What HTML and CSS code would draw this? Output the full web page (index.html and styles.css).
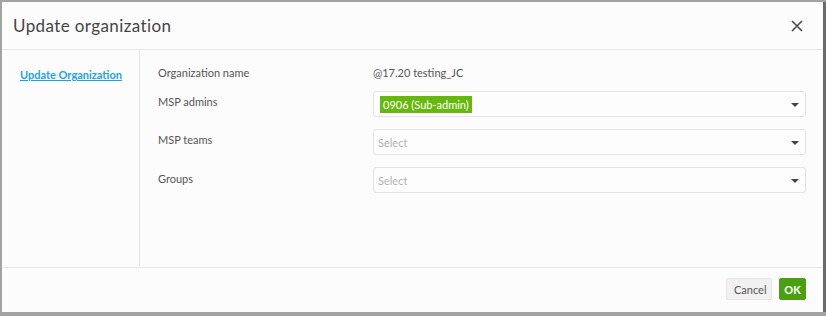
FILE: index.html
```html
<!DOCTYPE html>
<html>
<head>
<meta charset="utf-8">
<link rel="stylesheet" href="styles.css">
</head>
<body>
<div class="screen">
  <div class="modal">
    <div class="modal-header">
      <h1 class="title">Update organization</h1>
      <button class="close" aria-label="Close">
        <svg width="12" height="12" viewBox="0 0 12 12"><path d="M1 1L11 11M11 1L1 11" stroke="#4a4a4a" stroke-width="1.6" fill="none"/></svg>
      </button>
    </div>
    <div class="modal-body">
      <nav class="sidebar">
        <a class="side-link" href="#">Update Organization</a>
      </nav>
      <div class="form">
        <div class="row row-text">
          <div class="label">Organization name</div>
          <div class="value">@17.20 testing_JC</div>
        </div>
        <div class="row">
          <div class="label pad">MSP admins</div>
          <div class="select">
            <span class="tag">0906 (Sub-admin)</span>
            <span class="caret"></span>
          </div>
        </div>
        <div class="row">
          <div class="label pad">MSP teams</div>
          <div class="select">
            <span class="placeholder">Select</span>
            <span class="caret"></span>
          </div>
        </div>
        <div class="row">
          <div class="label pad">Groups</div>
          <div class="select">
            <span class="placeholder">Select</span>
            <span class="caret"></span>
          </div>
        </div>
      </div>
    </div>
    <div class="modal-footer">
      <button class="btn btn-cancel">Cancel</button>
      <button class="btn btn-ok">OK</button>
    </div>
  </div>
  <div class="edge"></div>
</div>
</body>
</html>
```
FILE: styles.css
```css
* { box-sizing: border-box; }
html, body { margin: 0; padding: 0; }
body {
  background: #a3a3a3;
  font-family: Lato, "Noto Sans", sans-serif;
  width: 826px;
  height: 316px;
  overflow: hidden;
}
.screen {
  display: flex;
  padding: 2px 0 0 2px;
  height: 316px;
}
.modal {
  width: 821px;
  height: 310px;
  background: #fcfcfc;
  display: flex;
  flex-direction: column;
}
.edge {
  width: 3px;
  height: 310px;
  background: #6b6b6b;
}
.modal-header {
  height: 48px;
  border-bottom: 1px solid #e6e6e6;
  display: flex;
  align-items: center;
  justify-content: space-between;
  padding: 0 20px 0 11px;
  flex: none;
}
.title {
  margin: 0;
  font-size: 17px;
  font-weight: 400;
  color: #444;
  letter-spacing: 0.4px;
}
.close {
  border: 0;
  background: none;
  padding: 0;
  width: 12px;
  height: 12px;
  display: flex;
}
.modal-body {
  flex: 1;
  display: flex;
  border-bottom: 1px solid #e8e8e8;
}
.sidebar {
  width: 138px;
  border-right: 1px solid #e6e6e6;
  padding: 13px 0 0 18px;
  flex: none;
}
.side-link {
  font-size: 11px;
  font-weight: 700;
  color: #1aa3e8;
  text-decoration: underline;
}
.form {
  flex: 1;
  display: flex;
  flex-direction: column;
  gap: 12px;
  padding: 15px 17px 0 18px;
}
.row {
  display: flex;
  align-items: flex-start;
}
.row-text { margin-bottom: -2px; }
.label {
  width: 215px;
  flex: none;
  font-size: 11px;
  color: #555;
  line-height: 16px;
}
.label.pad { padding-top: 3px; }
.row:last-child .label.pad { padding-top: 4px; }
.value {
  font-size: 11px;
  color: #555;
  line-height: 16px;
}
.select {
  flex: 1;
  height: 26px;
  border: 1px solid #e4e4e4;
  border-radius: 3px;
  background: #fdfdfd;
  display: flex;
  align-items: center;
  justify-content: space-between;
  padding: 0 6px 0 4px;
}
.tag {
  background: #67b80e;
  color: #fff;
  font-size: 11px;
  line-height: 17px;
  padding: 0 3px;
  margin-left: 2px;
}
.placeholder {
  font-size: 11px;
  color: #b3b3b3;
}
.caret {
  width: 0;
  height: 0;
  border-left: 4px solid transparent;
  border-right: 4px solid transparent;
  border-top: 4px solid #444;
  margin-top: 1px;
}
.modal-footer {
  flex: none;
  height: 44px;
  display: flex;
  align-items: center;
  justify-content: flex-end;
  gap: 7px;
  padding: 0 17px 2px 0;
}
.btn {
  font-family: Lato, "Noto Sans", sans-serif;
  font-size: 11px;
  height: 22px;
  border-radius: 2px;
  padding: 0 7px;
  cursor: pointer;
}
.btn-cancel {
  background: #f1f1f1;
  border: 1px solid #e6e6e6;
  color: #555;
  width: 46px;
}
.btn-ok {
  background: #4aa010;
  border: 1px solid #4aa010;
  color: #fff;
  font-weight: 700;
  width: 27px;
  padding: 0;
}
```
